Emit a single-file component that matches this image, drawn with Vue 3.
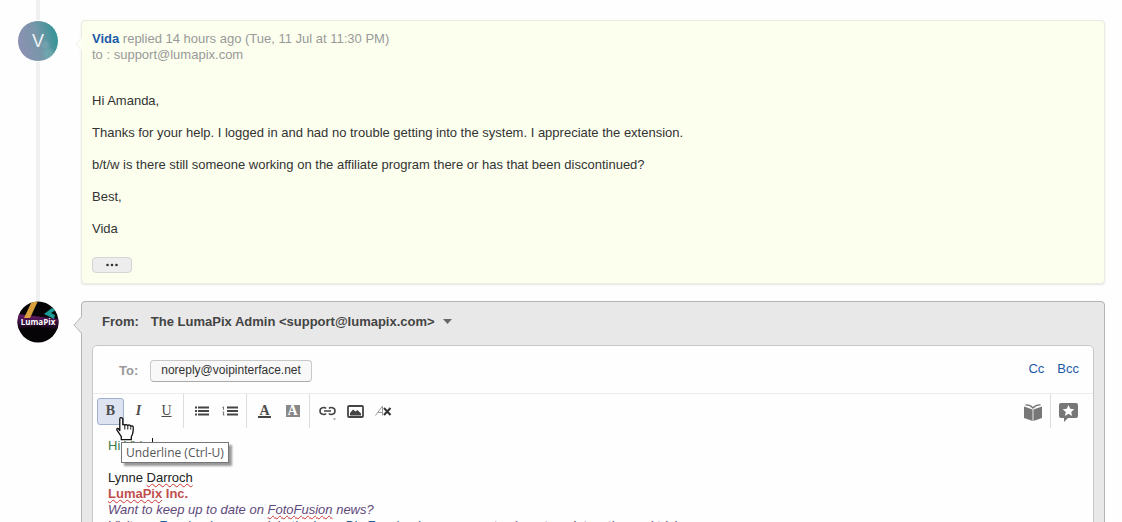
<script setup>
import { ref } from 'vue'
const sender = ref('The LumaPix Admin <support@lumapix.com>')
const paragraphs = [
  'Hi Amanda,',
  'Thanks for your help. I logged in and had no trouble getting into the system. I appreciate the extension.',
  'b/t/w is there still someone working on the affiliate program there or has that been discontinued?',
  'Best,',
  'Vida',
]
</script>

<template>
  <main class="thread">
    <article class="entry">
      <div class="avatar vida">V</div>
      <section class="message">
        <svg class="notch" width="7" height="14" viewBox="0 0 7 14"><path d="M7 0 1 7l6 7" fill="#fdfef4" stroke="#f0f0ea" /></svg>
        <header class="meta">
          <div><a href="#vida">Vida</a> replied 14 hours ago (Tue, 11 Jul at 11:30 PM)</div>
          <div>to : support@lumapix.com</div>
        </header>
        <p v-for="p in paragraphs" :key="p">{{ p }}</p>
        <button class="more" type="button" aria-label="Show quoted text">
          <svg width="14" height="4" viewBox="0 0 14 4"><g fill="#333"><circle cx="2.5" cy="2" r="1.3" /><circle cx="7" cy="2" r="1.3" /><circle cx="11.5" cy="2" r="1.3" /></g></svg>
        </button>
      </section>
    </article>

    <article class="entry reply">
      <div class="avatar luma">
        <svg width="42" height="42" viewBox="0 0 42 42">
          <defs>
            <clipPath id="disc"><circle cx="21" cy="21" r="20.5" /></clipPath>
            <linearGradient id="band" x1="0" y1="0" x2="0" y2="1"><stop offset="0" stop-color="#6a1c70" /><stop offset="1" stop-color="#0c040e" /></linearGradient>
          </defs>
          <g clip-path="url(#disc)">
            <rect width="42" height="42" fill="#060406" />
            <path d="M0 13 42 18V29L20 25 0 28Z" fill="url(#band)" />
            <path d="M15 0h6L13 17H7Z" fill="#d9a03c" />
            <path d="M35 7 27 13l10 5 1-4-4-2 5-3Z" fill="#1b9a96" />
          </g>
          <text x="21" y="24" text-anchor="middle" class="logo-text">LumaPix</text>
        </svg>
      </div>
      <section class="composer">
        <svg class="pointer" width="9" height="18" viewBox="0 0 9 18"><path d="M9 0 1 9l8 9Z" fill="#e8e8e8" /><path d="M9 0 1 9l8 9" fill="none" stroke="#b4b4b4" /></svg>
        <div class="from">
          <span class="from-label">From:</span>
          <button type="button" class="sender">{{ sender }}
            <svg width="9" height="5" viewBox="0 0 9 5"><path d="M0 0h9L4.500 5Z" fill="#666" /></svg>
          </button>
        </div>
        <div class="editor">
          <div class="to">
            <span class="to-label">To:</span>
            <button type="button" class="chip">noreply@voipinterface.net</button>
            <nav class="copies"><a href="#cc">Cc</a><a href="#bcc">Bcc</a></nav>
          </div>
          <div class="toolbar">
            <div class="group text-group">
              <button type="button" class="tool active" aria-label="Bold"><b>B</b>
                <svg class="cursor" width="18" height="24" viewBox="0 0 18 24"><path d="M6.5 2C5 .2 3.500 1 3.500 2.500V14L2.500 12.500C1.500 11 0 12 .7 13.500L5 20V23h10v-3c2-3 2-5 2-9 0-2-2-2.300-2.500-1C14 7.700 12 7.700 11.500 9.300 11 7.500 9 7.400 8.500 8.800 7.800 7.200 7 7.500 6.500 8Z" transform="translate(.3 -.3)" fill="#fff" stroke="#111" stroke-width="1.300" stroke-linejoin="round" /><path d="M8.800 9v3.500M11.800 9.500v3M14.700 10.500v2" stroke="#111" /></svg>
                <span class="tooltip" role="tooltip">Underline (Ctrl-U)</span>
              </button>
              <button type="button" class="tool" aria-label="Italic"><i>I</i></button>
              <button type="button" class="tool" aria-label="Underline"><u>U</u></button>
            </div>
            <div class="group">
              <button type="button" class="tool" aria-label="Bulleted list">
                <svg width="14" height="10" viewBox="0 0 14 10"><path d="M0 1.500h2M0 5h2M0 8.500h2M3 1.500h11M3 5h11M3 8.500h11" stroke="#444" stroke-width="1.800" /></svg>
              </button>
              <button type="button" class="tool" aria-label="Numbered list">
                <svg width="16" height="10" viewBox="0 0 16 10"><path d="M5 1.500h11M5 5h11M5 8.500h11" stroke="#444" stroke-width="1.800" /><path d="M.5 1.500 1.500.8V4M.5 6h1.500l-1 3h1.500" fill="none" stroke="#555" stroke-width=".8" /></svg>
              </button>
            </div>
            <div class="group">
              <button type="button" class="tool" aria-label="Text color"><span class="underbar">A</span></button>
              <button type="button" class="tool" aria-label="Background color"><span class="fillbox">A</span></button>
            </div>
            <div class="group last">
              <button type="button" class="tool" aria-label="Insert link">
                <svg width="17" height="18" viewBox="0 0 17 18"><path d="M7 6.500C6 5.200 1 4.800 1 9s5 3.800 6 2.500M10 6.500c1-1.300 6-1.700 6 2.500s-5 3.800-6 2.500M5 9h7" fill="none" stroke="#444" stroke-width="1.600" /><path d="M14 16.500h3l-1.500 1.500Z" fill="#777" /></svg>
              </button>
              <button type="button" class="tool" aria-label="Insert image">
                <svg width="17" height="13" viewBox="0 0 17 13"><rect x="1" y="1" width="15" height="11" rx="1" fill="#fff" stroke="#444" stroke-width="1.800" /><path d="M3 10.500V8l3-3.500 2.500 2 2-1.500L14 8.500v2Z" fill="#444" /></svg>
              </button>
              <button type="button" class="tool" aria-label="Clear formatting">
                <svg width="17" height="12" viewBox="0 0 17 12"><path d="M.5 10.500 7.500 1v9.500M3 7.500h4.500" fill="none" stroke="#999" /><path d="m9 3 6.500 7M15.500 3 9 10" stroke="#333" stroke-width="2" /></svg>
              </button>
            </div>
            <div class="extras">
              <button type="button" class="tool" aria-label="Insert solution article">
                <svg width="18" height="17" viewBox="0 0 18 17"><path d="M0 2.500 8.600 5.500V17L0 14ZM18 2.500 9.400 5.500V17L18 14Z" fill="#777" /><path d="M1.500 1C4 .8 7 1.800 9 4 11 1.800 14 .8 16.500 1" fill="none" stroke="#777" stroke-width="1.300" /></svg>
              </button>
              <button type="button" class="tool" aria-label="Insert canned response">
                <svg width="19" height="19" viewBox="0 0 19 19"><path d="M2 0h15q2 0 2 2v11q0 2-2 2H9l-4 4v-4H2q-2 0-2-2V2q0-2 2-2Z" fill="#777" /><path d="m9.500 2 1.700 3.800 4.100.4-3.100 2.700.9 4-3.600-2.100-3.600 2.100.9-4-3.100-2.700 4.100-.4Z" fill="#fff" /></svg>
              </button>
            </div>
          </div>
          <div class="body" contenteditable="true" spellcheck="false" role="textbox" aria-label="Reply">
            <div class="hello">Hi Vida<span class="caret"></span></div>
            <br>
            <div>Lynne <span class="typo">Darroch</span></div>
            <div class="company"><span class="typo">LumaPix</span> Inc.</div>
            <div class="news">Want to keep up to date on <span class="typo">FotoFusion</span> news?</div>
            <div class="news visit">Visit our <span class="fb">Facebook page</span> or join <span class="fb">the LumaPix Facebook user group</span> to share templates, tips and tricks.</div>
          </div>
        </div>
      </section>
    </article>
  </main>
</template>

<style>
html, body { background: #fefefe; }
</style>
<style scoped>
* { box-sizing: border-box; }
.thread {
  height: 100vh;
  overflow: hidden;
  padding: 20px 17px 0;
  font: 13px/16px "Liberation Sans", Arial, sans-serif;
  color: #333;
  background: linear-gradient(#f0f0f0, #f0f0f0) 36px 0 / 4px 320px no-repeat #fefefe;
}
button { font: inherit; color: inherit; padding: 0; border: 0; background: none; }
a { color: #1d5ba8; text-decoration: none; }
.entry { display: grid; grid-template-columns: 42px 1fr; gap: 22px; align-items: start; }
.avatar { width: 42px; height: 42px; border-radius: 50%; }
.avatar svg { display: block; }
.vida {
  border: 1px solid #fefefe;
  background: radial-gradient(circle at 68% 60%, #7ba5b3aa 0 7%, transparent 14%), radial-gradient(circle at 76% 82%, #73aeb1aa 0 7%, transparent 16%), linear-gradient(75deg, #8991b2 15%, #7897a9 50%, #3d9499 85%);
  color: #eef3f5;
  font-size: 18px;
  line-height: 40px;
  text-align: center;
}
.logo-text { font: bold 8px "Open Sans", sans-serif; fill: #fff; }
.message {
  position: relative;
  background: #fcffee;
  border: 1px solid #ebebe4;
  border-radius: 4px;
  box-shadow: 0 1px 2px #e6e6e6;
  padding: 10px;
  min-height: 264px;
}
.notch { position: absolute; left: -7px; top: 16px; }
.message p { margin: 0 0 16px; }
.meta { color: #999; margin-bottom: 30px; }
.meta a { font-weight: bold; }
.more {
  display: flex; align-items: center; justify-content: center;
  width: 40px; height: 16px; margin-top: 20px;
  background: #ededed; border: 1px solid #d4d4d4; border-radius: 4px;
}
.reply { margin-top: 17px; }
.composer {
  position: relative;
  background: #e8e8e8;
  border: 1px solid #b4b4b4;
  border-radius: 4px;
  padding: 0 10px 20px;
}
.pointer { position: absolute; left: -9px; top: 14px; }
.from { display: flex; align-items: center; height: 43px; gap: 12px; padding: 0 10px 4px; font-weight: bold; color: #444; }
.sender { display: flex; align-items: center; gap: 8px; font-weight: bold; }
.editor { background: #fefefe; border: 1px solid #c8c8c8; border-radius: 5px; }
.to { display: flex; align-items: center; height: 47px; padding: 2px 14px 0 26px; }
.to-label { font-weight: bold; color: #999; margin-right: 12px; }
.chip { height: 22px; padding: 0 10px 2px; font-size: 12px; border: 1px solid #c8c8c8; border-bottom-color: #aaa; border-radius: 4px; background: #f8f8f8; }
.copies { margin-left: auto; display: flex; gap: 13px; padding-bottom: 3px; }
.toolbar { display: flex; height: 35px; border-top: 1px solid #ececec; padding-right: 8px; }
.group { display: flex; align-items: center; gap: 1px; padding: 0 3px 0 4px; border-right: 1px solid #ddd; }
.text-group { width: 91px; }
.last { border: 0; }
.tool { position: relative; width: 27px; height: 27px; display: flex; align-items: center; justify-content: center; font: bold 14px/16px "Liberation Serif", serif; color: #4c4c4c; }
.tool u { font-weight: normal; }
.active { background: #dde3f1; border: 1px solid #9fb0cf; border-radius: 3px; }
.underbar { border-bottom: 2px solid #444; line-height: 11px; padding: 0 1px; }
.fillbox { background: #888; color: #fff; width: 14px; line-height: 12px; text-align: center; }
.extras { display: flex; margin-left: auto; align-items: center; }
.extras .tool { width: 35px; height: 100%; padding-top: 2px; }
.extras .tool + .tool { border-left: 1px solid #ddd; }
.cursor { position: absolute; left: 18px; top: 18px; z-index: 3; }
.tooltip {
  position: absolute; left: 23px; top: 43px; z-index: 2;
  padding: 1px 4px; border: 1px solid #767676; background: #fff; box-shadow: 3px 3px 2px #999;
  font: 12px/17px "Open Sans", sans-serif; color: #555; white-space: nowrap;
}
.body { padding: 10px 15px; outline: 0; color: #222; }
.hello { color: #3f7a45; }
.caret { display: inline-block; width: 1px; height: 14px; margin-left: 2px; vertical-align: top; background: #111; }
.typo { text-decoration: underline wavy #c33 1px; text-underline-offset: 1px; text-decoration-skip-ink: none; }
.company { color: #c0504d; font-weight: bold; }
.news { color: #5f497a; font-style: italic; }
.visit { white-space: nowrap; }
.fb { color: #1f5f99; }
</style>
